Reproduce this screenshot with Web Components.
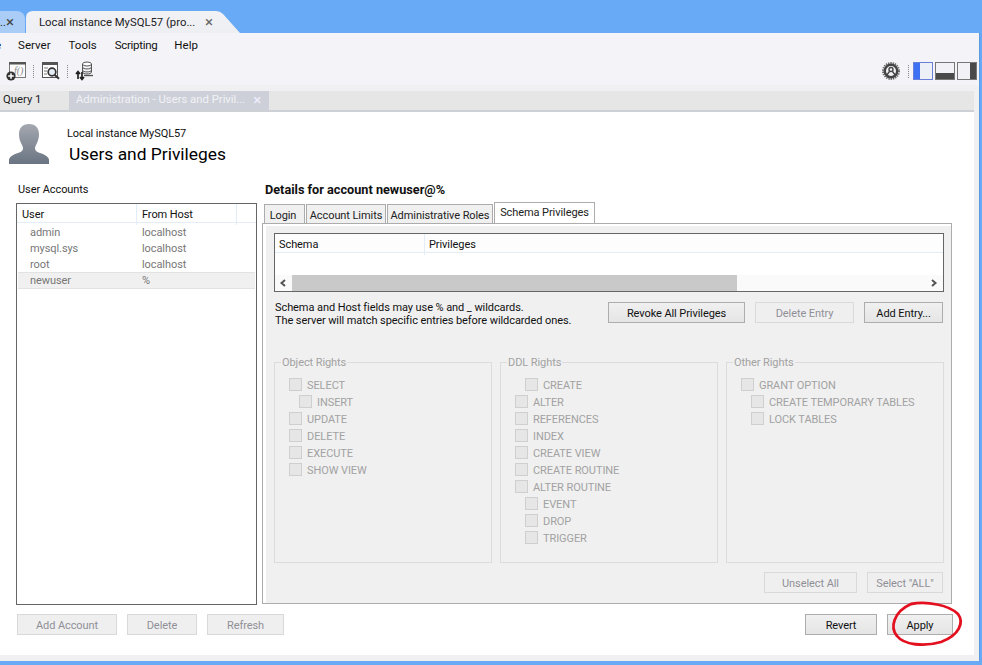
<!DOCTYPE html>
<html><head><meta charset="utf-8"><title>MySQL Workbench</title>
<style>
html,body{margin:0;padding:0;height:665px;overflow:hidden;background:#69aaf6}
body{font:11px Roboto,"Noto Sans",sans-serif;letter-spacing:-.08px;color:#111}
</style></head><body>
<wb-app></wb-app>
<script>
const def=(name,html,init)=>{customElements.define(name,class extends HTMLElement{
  constructor(){super();this.attachShadow({mode:'open'}).innerHTML=html;}
  connectedCallback(){if(init)init.call(this,this.shadowRoot);}
});};
const base='*{box-sizing:border-box}';

def('wb-btn',`<style>${base}
:host{display:inline-flex;align-items:center;justify-content:center;height:21px;border:1px solid #adadad;background:linear-gradient(#f0f0f0,#e5e5e5);color:#111;white-space:nowrap;flex:none;padding-top:2px}
:host([off]){border:1px solid #d9d9d9;background:#efefef;color:#8f8f98}
</style><slot></slot>`,function(){if(this.hasAttribute('w'))this.style.width=this.getAttribute('w')+'px';});

def('wb-check',`<style>${base}
:host{display:flex;align-items:center;height:17px;color:#a2a2a2;gap:5px;padding-left:calc(var(--i,0)*10px);white-space:nowrap}
i{display:block;width:13px;height:13px;border:1px solid #cfcfcf;background:#e6e6e6;flex:none}
span{padding-top:2px}
</style><i></i><span><slot></slot></span>`,function(){this.style.setProperty('--i',this.getAttribute('i')||0);});

def('wb-group',`<style>${base}
:host{display:block;height:208px}
fieldset{margin:0;height:100%;border:1px solid #dcdcdc;padding:0;min-width:0}
legend{margin-left:6px;padding:2px 1px 0;color:#a2a2a2;line-height:12px;height:14px}
.in{padding:7px 0 0 14px}
</style><fieldset><legend></legend><div class="in"><slot></slot></div></fieldset>`,function(r){r.querySelector('legend').textContent=this.getAttribute('label');});

def('wb-wintab',`<style>${base}
:host{display:flex;align-items:center;height:22px;flex:none;white-space:nowrap;color:#222;font-size:11.3px;letter-spacing:0}
:host([active]){width:214px;padding-left:13px;background:linear-gradient(#f2f2f6,#eeeff3);clip-path:path('M0 22 L0 7 Q0 0 7 0 L190 0 Q194 0 197 3 L214 22 Z')}
:host(:not([active])){width:25px;background:#a9cdf6;border-radius:0 8px 0 0;margin-right:1px;justify-content:flex-end;padding-right:11px}
span{margin-left:auto;margin-right:27px;font-size:15px;color:#666}
:host(:not([active])) span{margin:0;color:#444}
</style><slot></slot><span>×</span>`);

def('wb-menu',`<style>${base}
:host{display:flex;height:24px;align-items:center;background:#f4f4f8;color:#111;overflow:hidden;font-size:11.5px;letter-spacing:0}
::slotted(span){margin-right:18px;white-space:nowrap}
::slotted(.cut){margin-left:-5px;margin-right:17px}
::slotted(.tight){margin-right:17px;letter-spacing:-.3px}
</style><slot></slot>`);

def('wb-toolbar',`<style>${base}
:host{display:flex;height:28px;align-items:center;background:#f4f4f8;padding:0 2px 0 6px;letter-spacing:0}
.sep{width:1px;height:13px;border-left:1px dotted #888;flex:none}
svg{display:block;flex:none}
.sp{flex:1}
</style>
<svg width="21" height="20" viewBox="0 0 21 20"><rect x="3.5" y="1.5" width="16" height="15" fill="#fbfbfb" stroke="#777"/><rect x="3" y="1" width="17" height="2.500" fill="#555"/><text x="8" y="13" font-family="Liberation Serif,serif" font-style="italic" font-size="10" fill="#888">f()</text><circle cx="5" cy="15" r="4.600" fill="#333"/><path d="M5 12.200v5.600M2.200 15h5.600" stroke="#fff" stroke-width="1.500"/></svg>
<span class="sep" style="margin:0 7px 0 6px"></span>
<svg width="19" height="20" viewBox="0 0 19 20"><rect x="1.5" y="1.500" width="15" height="15" fill="#fff" stroke="#555"/><rect x="1" y="1" width="16" height="3" fill="#555"/><path d="M3 7h4M3 10h3M3 13h3" stroke="#777"/><circle cx="11" cy="11" r="3.800" fill="#e6edf4" stroke="#333" stroke-width="1.700"/><path d="M13.500 13.800l4.500 4" stroke="#333" stroke-width="2"/></svg>
<span class="sep" style="margin:0 7px 0 7px"></span>
<svg width="20" height="20" viewBox="0 0 20 20"><ellipse cx="12" cy="3" rx="4.500" ry="2" fill="#fff" stroke="#555"/><path d="M7.500 3v8c0 2.600 9 2.600 9 0V3M7.500 6c0 2.600 9 2.600 9 0M7.500 9c0 2.600 9 2.600 9 0" fill="none" stroke="#555"/><path d="M9 14.500h9" stroke="#555" stroke-width="1.400"/><path d="M3 11v7M1 13l2-2.500L5 13M7 11v7M5 16l2 2.500L9 16" fill="none" stroke="#222" stroke-width="1.700"/></svg>
<span class="sp"></span>
<svg width="20" height="20" viewBox="0 0 20 20"><circle cx="10" cy="10" r="8" fill="none" stroke="#666" stroke-width="2" stroke-dasharray="1.300 1"/><circle cx="10" cy="10" r="6.200" fill="none" stroke="#444" stroke-width="2.400"/><circle cx="10" cy="8.500" r="2" fill="none" stroke="#444" stroke-width="1.400"/><path d="M5.500 14.500l3-4M14.500 14.500l-3-4" stroke="#444" stroke-width="1.400"/></svg>
<span class="sep" style="margin:0 4px 0 7px"></span>
<svg width="20" height="18" viewBox="0 0 20 18" style="margin-right:2px"><rect x=".5" y=".5" width="19" height="17" fill="#eef0f8" stroke="#6a80d8"/><rect x="1" y="1" width="6" height="16" fill="#3d70f2"/></svg>
<svg width="20" height="18" viewBox="0 0 20 18" style="margin-right:2px"><rect x=".5" y=".5" width="19" height="17" fill="#f2f2f6" stroke="#777"/><rect x="1" y="11" width="18" height="6" fill="#4a4a4a"/></svg>
<svg width="20" height="18" viewBox="0 0 20 18"><rect x=".5" y=".5" width="19" height="17" fill="#f2f2f6" stroke="#777"/><rect x="13" y="1" width="6" height="16" fill="#4a4a4a"/></svg>`);

def('wb-doctabs',`<style>${base}
:host{display:flex;height:27px;background:#f0f0f2;padding-top:6px;padding-right:5px;font-size:11.3px;letter-spacing:0}
.strip{display:flex;flex:1;height:21px;background:#e6e6e6;border-bottom:2px solid #cdd0d5}
::slotted(span){display:flex;align-items:center;height:19px;white-space:nowrap;padding-bottom:2px}
::slotted(.q){width:69px;padding-left:3px;color:#222}
::slotted(.adm){width:200px;padding-left:7px;background:#cdd0d8;color:#f2f2f6}
</style><div class="strip"><slot></slot></div>`);

def('wb-accounts',`<style>${base}
:host{display:flex;flex-direction:column;width:241px;flex:none}
.t{height:21px;line-height:15px;padding:0 0 0 2px;color:#111}
.list{height:402px;border:1px solid #666;background:#fff}
.head{display:grid;grid-template-columns:120px 100px 1fr;height:19px;background:#fff;border-bottom:1px solid #e3edf8;line-height:21px}
.head span{padding-left:5px;border-right:1px solid #e3edf8}
.head span:last-child{border:0}
.row{display:grid;grid-template-columns:112px 1fr;height:16px;line-height:17px;color:#777;padding-left:13px}
.row:nth-child(2){margin-top:1px}
.row.sel{background:#f0f0f0;border-top:1px solid #e2e2e2;border-bottom:1px solid #e2e2e2;margin:0 0 0 1px;padding-left:12px;height:17px;width:237px;line-height:15px}
.b{display:flex;gap:10px;margin-top:9px;padding-left:1px}
</style><div class="t">User Accounts</div>
<div class="list"><div class="head"><span>User</span><span>From Host</span><span></span></div>
<div class="row"><span>admin</span><span>localhost</span></div>
<div class="row"><span>mysql.sys</span><span>localhost</span></div>
<div class="row"><span>root</span><span>localhost</span></div>
<div class="row sel"><span>newuser</span><span>%</span></div></div>
<div class="b"><slot></slot></div>`);

def('wb-details',`<style>${base}
:host{display:flex;flex-direction:column;width:690px;flex:none;margin-left:5px}
.t{height:21px;font-weight:700;font-size:12.7px;letter-spacing:0;line-height:15px;padding-left:3px;color:#111}
.tabs{display:flex;height:20px;padding-left:2px;position:relative;z-index:1}
.tab{height:19px;margin-top:1px;border:1px solid #acacac;border-bottom:0;background:#f0f0f0;display:flex;align-items:center;justify-content:center;margin-right:1px;color:#222;white-space:nowrap;padding-top:2px}
.tab.on{height:21px;margin-top:-1px;background:#fff;border-bottom:0;color:#222;margin-right:0;padding:0 0 2px}
.panel{height:381px;border:1px solid #acacac;background:#f0f0f0;padding:9px 7px 0 11px;box-shadow:inset 3px 2px 0 #fff}
.table{height:59px;border:1px solid #666;background:#fff;display:flex;flex-direction:column}
.th{height:19px;display:grid;grid-template-columns:150px 1fr;background:#fdfdfd;border-bottom:1px solid #e3edf8;line-height:21px}
.th span{padding-left:4px}.th span:first-child{border-right:1px solid #e3edf8}
.body{flex:1}
.sb{height:16px;display:flex;background:#fafafa;align-items:center}
.sb svg{flex:none;display:block}
.thumb{width:445px;height:16px;background:#c9c9c9}
.help{display:flex;height:21px;margin-top:10px;align-items:flex-start}
.note{flex:1;line-height:13px;margin:-1px 0 0 1px;color:#111;white-space:nowrap}
.btns{display:flex;gap:10px;padding-right:1px}
.groups{display:grid;grid-template-columns:218px 218px 218px;gap:8px;margin-top:32px}
.sel{display:flex;justify-content:flex-end;gap:10px;margin-top:9px;padding-right:1px}
</style>
<div class="t">Details for account newuser@%</div>
<div class="tabs"><div class="tab" style="width:41px;padding-right:3px">Login</div><div class="tab" style="width:80px">Account Limits</div><div class="tab" style="width:106px">Administrative Roles</div><div class="tab on" style="width:101px">Schema Privileges</div></div>
<div class="panel">
<div class="table"><div class="th"><span>Schema</span><span>Privileges</span></div><div class="body"></div>
<div class="sb"><svg width="17" height="16" viewBox="0 0 17 16"><path d="M10 5L6.500 8 10 11" fill="none" stroke="#555" stroke-width="2"/></svg><div class="thumb"></div><span style="flex:1"></span><svg width="17" height="16" viewBox="0 0 17 16"><path d="M6 5l3.500 3L6 11" fill="none" stroke="#555" stroke-width="2"/></svg></div></div>
<div class="help"><div class="note">Schema and Host fields may use % and _ wildcards.<br>The server will match specific entries before wildcarded ones.</div>
<div class="btns"><slot name="top"></slot></div></div>
<div class="groups"><slot name="groups"></slot></div>
<div class="sel"><slot name="sel"></slot></div>
</div>`);

def('wb-header',`<style>${base}
:host{display:flex;height:70px;padding:12px 0 0 9px}
svg{display:block;flex:none}
.x{margin-left:18px;padding-top:3px}
.a{line-height:13px;color:#111}
.b{font-size:17.4px;letter-spacing:0;line-height:24px;margin:2px 0 0 2px;color:#000}
</style><svg width="40" height="40" viewBox="0 0 40 40"><defs><linearGradient id="g" x1="0" y1="0" x2="0" y2="1"><stop offset="0" stop-color="#a4a8b0"/><stop offset="1" stop-color="#6a7482"/></linearGradient></defs><path fill="url(#g)" d="M20 0c7 0 10 4.500 10 10.500 0 3-.8 6-2 8.500-1 2-2 3.500-2 5.500 0 2.500 2 3.500 5 4.500 4 1.400 8 3 9 6.500V40H0v-4.500c1-3.500 5-5.100 9-6.500 3-1 5-2 5-4.500 0-2-1-3.500-2-5.500-1.200-2.500-2-5.500-2-8.500C10 4.500 13 0 20 0z"/></svg>
<div class="x"><div class="a">Local instance MySQL57</div><div class="b">Users and Privileges</div></div>`);

def('wb-app',`<style>${base}
:host{display:flex;flex-direction:column;height:665px;position:relative}
.top{display:flex;height:33px;padding-top:11px;background:#69aaf6}
.win{width:980px;height:628px;background:#f0f0f2;display:flex;flex-direction:column;border-right:1px solid #5b9ae2}
.main{width:974px;height:543px;background:#fff;display:flex;flex-direction:column}
.cols{display:flex;padding-left:16px}
.foot{display:flex;justify-content:flex-end;gap:10px;padding-right:21px;margin-top:-21px}
.ring{position:absolute;left:889px;top:600px}
</style>
<div class="top"><wb-wintab>..</wb-wintab><wb-wintab active>Local instance MySQL57 (pro...</wb-wintab></div>
<div class="win">
<wb-menu><span class="cut">e</span><span>Server</span><span>Tools</span><span class="tight">Scripting</span><span>Help</span></wb-menu>
<wb-toolbar></wb-toolbar>
<wb-doctabs><span class="q">Query 1</span><span class="adm">Administration - Users and Privil...<span style="margin-left:8px;font-size:15px;color:#eef">×</span></span></wb-doctabs>
<div class="main">
<wb-header></wb-header>
<div class="cols">
<wb-accounts><wb-btn off w="100">Add Account</wb-btn><wb-btn off w="70">Delete</wb-btn><wb-btn off w="77">Refresh</wb-btn></wb-accounts>
<wb-details>
<wb-btn slot="top" w="137">Revoke All Privileges</wb-btn><wb-btn slot="top" off w="99">Delete Entry</wb-btn><wb-btn slot="top" w="79">Add Entry...</wb-btn>
<wb-group slot="groups" label="Object Rights"><wb-check>SELECT</wb-check><wb-check i="1">INSERT</wb-check><wb-check>UPDATE</wb-check><wb-check>DELETE</wb-check><wb-check>EXECUTE</wb-check><wb-check>SHOW VIEW</wb-check></wb-group>
<wb-group slot="groups" label="DDL Rights"><wb-check i="1">CREATE</wb-check><wb-check>ALTER</wb-check><wb-check>REFERENCES</wb-check><wb-check>INDEX</wb-check><wb-check>CREATE VIEW</wb-check><wb-check>CREATE ROUTINE</wb-check><wb-check>ALTER ROUTINE</wb-check><wb-check i="1">EVENT</wb-check><wb-check i="1">DROP</wb-check><wb-check i="1">TRIGGER</wb-check></wb-group>
<wb-group slot="groups" label="Other Rights"><wb-check>GRANT OPTION</wb-check><wb-check i="1">CREATE TEMPORARY TABLES</wb-check><wb-check i="1">LOCK TABLES</wb-check></wb-group>
<wb-btn slot="sel" off w="93">Unselect All</wb-btn><wb-btn slot="sel" off w="76">Select "ALL"</wb-btn>
</wb-details>
</div>
<div class="foot"><wb-btn w="72">Revert</wb-btn><wb-btn w="66">Apply</wb-btn></div>
</div>
</div>
<svg class="ring" width="76" height="48" viewBox="0 0 76 48"><path d="M22 4C38 1 60 5 69 14c6 8 2 21-17 28-17 5-37 3-44-6C1 28 4 12 22 4z" fill="none" stroke="#e3101f" stroke-width="2.800"/></svg>`);
</script>
</body></html>
